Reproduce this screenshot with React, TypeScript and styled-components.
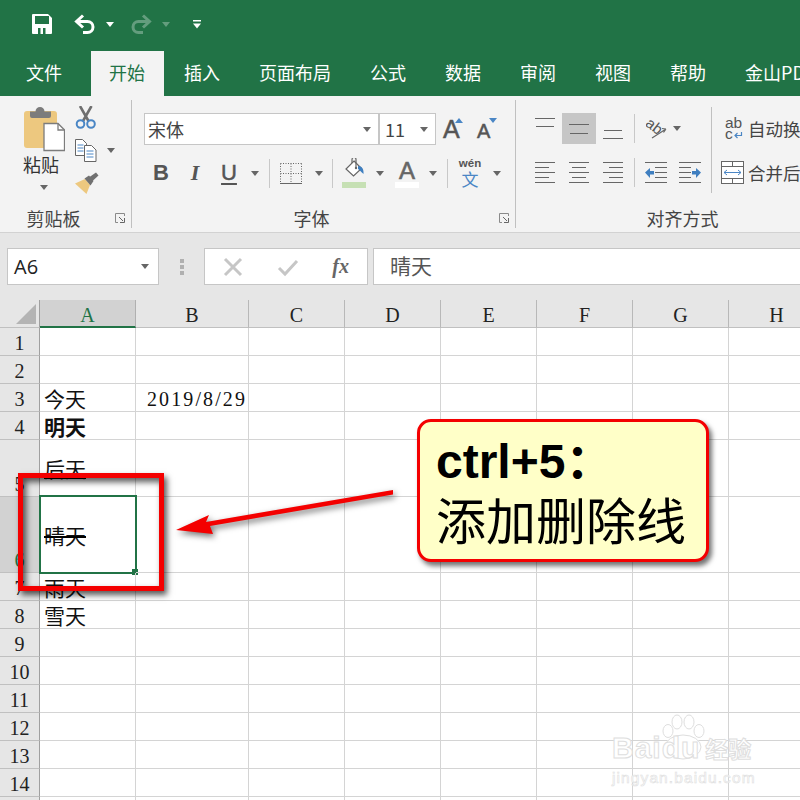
import styled, {createGlobalStyle} from 'styled-components'
import {FC, ReactNode} from 'react'

const GREEN = '#217346'
const CJK = '"Noto Sans CJK SC", "Liberation Sans", sans-serif'
const SHEET_FONT = '"Liberation Serif", "Noto Sans CJK SC", serif'

const Global = createGlobalStyle`
  html, body { margin: 0; padding: 0; background: #fff; }
  body { width: 800px; height: 800px; overflow: hidden; font-family: ${CJK}; }
`

const Page = styled.div`
  position: relative;
  width: 800px;
  height: 800px;
  overflow: hidden;
  display: flex;
  flex-direction: column;
`

/* title + tabs */
const QuickBar = styled.div`
  height: 48px;
  flex: none;
  background: ${GREEN};
  display: flex;
  align-items: center;
  padding-left: 32px;
  box-sizing: border-box;
`
const Quick = styled.div<{$ml?: number; $w?: number; $dim?: boolean}>`
  display: flex;
  align-items: center;
  justify-content: center;
  flex: none;
  margin-left: ${p => p.$ml ?? 0}px;
  width: ${p => (p.$w ? `${p.$w}px` : 'auto')};
  opacity: ${p => (p.$dim ? 0.3 : 1)};
`
const TabBar = styled.div`
  height: 48px;
  flex: none;
  background: ${GREEN};
  display: flex;
  align-items: flex-end;
  padding-left: 6px;
  white-space: nowrap;
`
const Tab = styled.div<{$active?: boolean; $mr?: number}>`
  height: 45px;
  line-height: 42px;
  padding: 0 19px 0 ${p => (p.$active ? 18 : 20)}px;
  margin-right: ${p => p.$mr ?? 0}px;
  font-size: 18px;
  color: ${p => (p.$active ? GREEN : '#fff')};
  background: ${p => (p.$active ? '#f3f3f3' : 'transparent')};
  flex: none;
`

/* ribbon */
const Ribbon = styled.div`
  height: 137px;
  flex: none;
  background: #f3f3f3;
  border-bottom: 1px solid #d2d2d2;
  box-sizing: border-box;
  display: flex;
  padding-top: 4px;
  color: #444;
`
const Group = styled.div<{$w: number}>`
  width: ${p => p.$w}px;
  height: 128px;
  flex: none;
  display: flex;
  flex-direction: column;
  box-sizing: border-box;
  border-right: 1px solid #c0c0c0;
`
const GroupBody = styled.div<{$pl: number; $pt: number}>`
  flex: 1;
  display: flex;
  padding: ${p => p.$pt}px 0 0 ${p => p.$pl}px;
  min-height: 0;
`
const GroupFoot = styled.div`
  height: 20px;
  flex: none;
  display: flex;
  align-items: center;
`
const GroupLabel = styled.div`
  flex: 1;
  text-align: center;
  font-size: 18px;
  line-height: 20px;
  color: #444;
`
const Launcher = styled.div`
  width: 24px;
  flex: none;
  display: flex;
  justify-content: flex-start;
  padding-left: 8px;
  box-sizing: border-box;
`
const Caret = styled.span<{$dark?: boolean}>`
  display: inline-block;
  width: 0;
  height: 0;
  border-left: 4.5px solid transparent;
  border-right: 4.5px solid transparent;
  border-top: 5px solid ${p => (p.$dark ? '#666' : '#fff')};
`
const PasteCol = styled.div`
  width: 42px;
  flex: none;
  display: flex;
  flex-direction: column;
  align-items: center;
`
const PasteLabel = styled.div`
  font-size: 18px;
  line-height: 24px;
  margin: 0 6px 0 0;
  white-space: nowrap;
  color: #333;
`
const PasteCaret = styled.div`
  margin-top: 2px;
  line-height: 0;
  padding-top: 5px;
`
const ClipCol = styled.div`
  margin-left: 10px;
  display: flex;
  flex-direction: column;
  gap: 11px;
`
const ClipRow = styled.div`
  display: flex;
  align-items: center;
  height: 22px;
`
const CaretSlot = styled.div<{$w?: number; $ml?: number}>`
  width: ${p => p.$w ?? 18}px;
  margin-left: ${p => p.$ml ?? 0}px;
  flex: none;
  display: flex;
  justify-content: center;
  align-items: center;
`
const FontCol = styled.div`
  display: flex;
  flex-direction: column;
  gap: 12px;
`
const FontRow = styled.div`
  height: 32px;
  display: flex;
  align-items: center;
`
const FontBox = styled.div<{$w: number; $pl: number}>`
  width: ${p => p.$w}px;
  height: 32px;
  flex: none;
  box-sizing: border-box;
  background: #fff;
  border: 1.5px solid #c6c6c6;
  display: flex;
  align-items: center;
  justify-content: space-between;
  padding: 0 7px 0 ${p => p.$pl}px;
  font-size: 18px;
  color: #444;
`
const GrowBtn = styled.div<{$ml: number; $small?: boolean}>`
  position: relative;
  margin-left: ${p => p.$ml}px;
  width: 20px;
  height: 32px;
  box-sizing: border-box;
  padding-top: ${p => (p.$small ? 2 : 0)}px;
  flex: none;
  font: 400 ${p => (p.$small ? 20 : 25)}px/32px "Liberation Sans", sans-serif;
  color: #555;
  -webkit-text-stroke: 0.5px #555;
`
const GrowMark = styled.span<{$down?: boolean}>`
  position: absolute;
  right: 0;
  top: 5px;
  width: 0;
  height: 0;
  border-left: 4px solid transparent;
  border-right: 4px solid transparent;
  ${p => (p.$down
    ? 'border-top: 5px solid #4a86c5;'
    : 'border-bottom: 5px solid #4a86c5;')}
`
const Glyph = styled.div<{$kind: 'b' | 'i' | 'u'}>`
  width: 34px;
  flex: none;
  text-align: center;
  color: #555;
  font-size: 22px;
  line-height: 30px;
  font-family: ${p => (p.$kind === 'i' ? '"Liberation Serif", serif' : '"Liberation Sans", sans-serif')};
  font-weight: ${p => (p.$kind === 'u' ? 400 : 700)};
  font-style: ${p => (p.$kind === 'i' ? 'italic' : 'normal')};
  text-decoration: ${p => (p.$kind === 'u' ? 'underline' : 'none')};
  text-underline-offset: 3px;
  text-decoration-thickness: 2px;
  -webkit-text-stroke: ${p => (p.$kind === 'u' ? '0.5px #555' : '0')};
`
const VSep = styled.div<{$ml?: number; $mr?: number}>`
  width: 1px;
  height: 29px;
  flex: none;
  margin-left: ${p => p.$ml ?? 0}px;
  margin-right: ${p => p.$mr ?? 0}px;
  background: #c8c8c8;
`
const ColorBtn = styled.div<{$ml: number}>`
  width: 24px;
  height: 30px;
  flex: none;
  margin-left: ${p => p.$ml}px;
  display: flex;
  flex-direction: column;
  align-items: center;
  justify-content: flex-end;
`
const ColorA = styled.div`
  font: 400 24px/22px "Liberation Sans", sans-serif;
  color: #666;
  -webkit-text-stroke: 0.6px #666;
`
const ColorBar = styled.div<{$c: string}>`
  width: 24px;
  height: 6px;
  flex: none;
  background: ${p => p.$c};
`
const PhoneticBtn = styled.div`
  margin-left: 11px;
  width: 22px;
  flex: none;
  display: flex;
  flex-direction: column;
  align-items: center;
  height: 32px;
`
const PhoneticTop = styled.div`
  font: 700 11.5px/12px "Liberation Sans", sans-serif;
  color: #555;
`
const PhoneticBottom = styled.div`
  font-size: 17px;
  line-height: 20px;
  color: #4a86c5;
`
const AlignRows = styled.div`
  width: 183px;
  flex: none;
  display: flex;
  flex-direction: column;
  gap: 13px;
`
const AlignRow = styled.div`
  height: 31px;
  display: flex;
  align-items: center;
`
const AlignCell = styled.div<{$on?: boolean}>`
  width: 34px;
  height: 31px;
  flex: none;
  display: flex;
  align-items: center;
  justify-content: center;
  background: ${p => (p.$on ? '#c6c6c6' : 'transparent')};
`
const InnerSep = styled.div`
  width: 1px;
  height: 86px;
  margin-top: -6px;
  flex: none;
  background: #c0c0c0;
`
const WrapCol = styled.div`
  margin-left: 9px;
  display: flex;
  flex-direction: column;
  gap: 13px;
`
const WrapRow = styled.div`
  height: 31px;
  display: flex;
  align-items: center;
  font-size: 17.5px;
  white-space: nowrap;
  color: #444;
`
const WrapIcon = styled.div`
  width: 27px;
  flex: none;
  display: flex;
  align-items: center;
`

/* formula bar */
const FormulaBar = styled.div`
  height: 67px;
  flex: none;
  background: #e6e6e6;
  box-sizing: border-box;
  padding: 15px 0 0 7px;
  display: flex;
  align-items: flex-start;
`
const NameBox = styled.div`
  width: 152px;
  height: 37px;
  box-sizing: border-box;
  flex: none;
  background: #fff;
  border: 1px solid #c6c6c6;
  display: flex;
  align-items: center;
  justify-content: space-between;
  padding: 0 9px 0 6px;
  font: 400 20px "Open Sans", "Liberation Sans", sans-serif;
  color: #222;
`
const Grip = styled.div`
  width: 45px;
  height: 37px;
  flex: none;
  display: flex;
  align-items: center;
  justify-content: center;
`
const FxBox = styled.div`
  width: 164px;
  height: 37px;
  flex: none;
  box-sizing: border-box;
  background: #fff;
  border: 1px solid #c6c6c6;
  display: flex;
  align-items: center;
  justify-content: space-between;
  padding: 0 18px 0 18px;
`
const FxLabel = styled.span`
  font: italic 700 20px "Liberation Serif", serif;
  color: #666;
`
const FormulaInput = styled.div`
  flex: 1;
  height: 37px;
  margin-left: 5px;
  box-sizing: border-box;
  background: #fff;
  border: 1px solid #c6c6c6;
  border-right: 0;
  padding-left: 16px;
  font-size: 21px;
  line-height: 33px;
  color: #555;
`

/* sheet */
const Sheet = styled.div`
  flex: 1;
  display: grid;
  grid-template-columns: 40px 96px 113px repeat(6, 96px);
  grid-auto-rows: auto;
  align-content: start;
  background: #fff;
  overflow: hidden;
`
const Corner = styled.div`
  height: 28px;
  background: #e6e6e6;
  border-right: 1px solid #a0a0a0;
  border-bottom: 1px solid #c0c0c0;
  box-sizing: border-box;
  display: flex;
  align-items: flex-end;
  justify-content: flex-end;
  padding: 0 3px 3px 0;
`
const ColHead = styled.div<{$on?: boolean}>`
  height: 28px;
  background: ${p => (p.$on ? '#d2d2d2' : '#e6e6e6')};
  color: ${p => (p.$on ? GREEN : '#222')};
  border-right: 1px solid ${p => (p.$on ? '#b0b0b0' : '#b8b8b8')};
  border-bottom: ${p => (p.$on ? `2px solid ${GREEN}` : '1px solid #c0c0c0')};
  box-sizing: border-box;
  text-align: center;
  font: 400 20px/30px ${SHEET_FONT};
`
const RowHead = styled.div<{$on?: boolean; $h: number}>`
  height: ${p => p.$h}px;
  background: ${p => (p.$on ? '#d2d2d2' : '#e6e6e6')};
  color: ${p => (p.$on ? GREEN : '#222')};
  border-right: 1px solid #a0a0a0;
  border-bottom: 1px solid #c0c0c0;
  box-sizing: border-box;
  display: flex;
  align-items: flex-end;
  justify-content: center;
  font: 400 20px/24px ${SHEET_FONT};
`
const Cell = styled.div<{$h: number; $right?: boolean}>`
  position: relative;
  height: ${p => p.$h}px;
  box-sizing: border-box;
  border-right: 1px solid #d4d4d4;
  border-bottom: 1px solid #d4d4d4;
  display: flex;
  align-items: center;
  justify-content: ${p => (p.$right ? 'flex-end' : 'flex-start')};
  padding: 0 ${p => (p.$right ? 1 : 0)}px 0 4px;
  white-space: nowrap;
  color: #111;
`
const CellText = styled.span<{$bold?: boolean; $line?: 'under' | 'strike'}>`
  position: relative;
  font: ${p => (p.$bold ? 700 : 400)} 21px/24px ${CJK};
  &::after {
    content: '';
    display: ${p => (p.$line ? 'block' : 'none')};
    position: absolute;
    left: 0;
    right: 0;
    top: ${p => (p.$line === 'under' ? 21 : 13)}px;
    height: 2px;
    background: #000;
  }
`
const DateText = styled.span`
  font: 400 20px/24px ${SHEET_FONT};
  letter-spacing: 2.1px;
  margin-top: 2px;
`
const Selection = styled.div`
  position: absolute;
  left: -1px;
  top: -2px;
  right: -2px;
  bottom: -2px;
  border: 2px solid ${GREEN};
  &::after {
    content: '';
    position: absolute;
    right: -3px;
    bottom: -3px;
    width: 6px;
    height: 6px;
    background: ${GREEN};
  }
`

/* annotations lying over the sheet */
const RedFrame = styled.div`
  position: absolute;
  left: 18px;
  top: 473px;
  width: 146px;
  height: 118px;
  box-sizing: border-box;
  border: 5px solid #f40000;
  box-shadow: 3px 4px 6px rgba(0, 0, 0, 0.65), inset 3px 4px 6px rgba(0, 0, 0, 0.65);
`
const Arrow = styled.svg`
  position: absolute;
  left: 170px;
  top: 480px;
  filter: drop-shadow(2px 3px 3px rgba(0, 0, 0, 0.55));
`
const Callout = styled.div`
  position: absolute;
  left: 417px;
  top: 419px;
  width: 292px;
  height: 143px;
  box-sizing: border-box;
  border: 3px solid #f40000;
  border-radius: 14px;
  background: #ffffc8;
  box-shadow: 3px 4px 5px rgba(0, 0, 0, 0.55);
  padding: 9px 0 0 16px;
  color: #000;
`
const CalloutKey = styled.div`
  font: 700 48px/62px "Liberation Sans", "Noto Sans CJK SC", sans-serif;
  white-space: nowrap;
`
const CalloutText = styled.div`
  font: 400 50px/60px ${CJK};
  white-space: nowrap;
  margin-top: -5px;
`
const Watermark = styled.div`
  position: absolute;
  left: 612px;
  top: 714px;
  width: 150px;
  color: #fff;
  -webkit-text-stroke: 1px #dedede;
`
const WmTop = styled.div`
  position: relative;
  z-index: 1;
  display: flex;
  align-items: baseline;
  font: 700 30px/36px "Liberation Sans", sans-serif;
  letter-spacing: 1px;
  margin-top: 16px;
`
const WmCn = styled.span`
  margin-left: 5px;
  font: 700 23px/30px ${CJK};
  letter-spacing: 0;
`
const WmUrl = styled.div`
  font: 400 15.5px/18px "Liberation Sans", sans-serif;
  letter-spacing: 1.1px;
  margin-top: 3px;
  -webkit-text-stroke: 0.6px #dedede;
`
const WmPaw = styled.svg`
  position: absolute;
  left: 49px;
  top: 0;
`

/* icons */
const SaveIcon = () => (
    <svg width="20" height="20" viewBox="0 0 20 20">
        <path d="M1 0h15l4 4v15a1 1 0 0 1-1 1H1a1 1 0 0 1-1-1V1a1 1 0 0 1 1-1z" fill="#fff"/>
        <rect x="3" y="2" width="14" height="8" fill={GREEN}/>
        <rect x="6" y="14" width="2.5" height="6" fill={GREEN}/>
        <rect x="11" y="14" width="2.5" height="6" fill={GREEN}/>
    </svg>
)
const UndoIcon: FC<{flip?: boolean}> = ({flip}) => (
    <svg width="22" height="20" viewBox="0 0 22 20" style={flip ? {transform: 'scaleX(-1)'} : undefined}>
        <path d="M9 1.5 2.5 7.5 9 13.5M3 7.5h10.5a5 5 0 0 1 0 11H9" fill="none" stroke="#fff" strokeWidth="3"/>
    </svg>
)
const CustomizeIcon = () => (
    <svg width="10" height="9" viewBox="0 0 10 9">
        <rect x="1" width="8" height="1.5" fill="#fff"/>
        <path d="M1 3.5h8L5 8.5z" fill="#fff"/>
    </svg>
)
const PasteIcon = () => (
    <svg width="42" height="46" viewBox="0 0 42 46" style={{flex: 'none'}}>
        <rect x="1" y="5" width="33" height="37" rx="3" fill="#edc87f"/>
        <path d="M7 5.500h5.500a4 4 0 0 1 9 0H28v4.500a2 2 0 0 1-2 2H9a2 2 0 0 1-2-2z" fill="#7c7c7c"/>
        <path d="M21 17.500h14l6.500 6.500v20.500H21z" fill="#fff" stroke="#7c7c7c" strokeWidth="1.300"/>
        <path d="M35 17.500v6.500h6.500" fill="none" stroke="#7c7c7c" strokeWidth="1.300"/>
    </svg>
)
const ScissorsIcon = () => (
    <svg width="22" height="23" viewBox="0 0 22 23">
        <path d="M5 0 13.500 15M16.500 0 8 15" stroke="#6f6f6f" strokeWidth="2.600" fill="none"/>
        <circle cx="5.500" cy="18" r="3.800" fill="none" stroke="#4a86c5" strokeWidth="2"/>
        <circle cx="16" cy="18" r="3.800" fill="none" stroke="#4a86c5" strokeWidth="2"/>
    </svg>
)
const CopyIcon = () => (
    <svg width="22" height="23" viewBox="0 0 22 23">
        <path d="M.5.5h7l4 4v12H.5z" fill="#fff" stroke="#666"/>
        <path d="M2.500 6h6M2.500 9h6M2.500 12h6" stroke="#4a86c5"/>
        <path d="M9.500 6.500h7l4.500 4.500v11.500H9.500z" fill="#fff" stroke="#666"/>
        <path d="M11.500 12h7M11.500 15h7M11.500 18h7" stroke="#4a86c5"/>
    </svg>
)
const BrushIcon = () => (
    <svg width="24" height="22" viewBox="0 0 24 22">
        <path d="M0 11.500 10 7l5 6-3.500 9z" fill="#edc87f"/>
        <path d="M9.500 6.500 14 3.500l4.500 5.500-3 4.500z" fill="#707070"/>
        <path d="M14.500 5 21 .5l2.500 3L17.500 9z" fill="#707070"/>
    </svg>
)
const LauncherIcon = () => (
    <svg width="10" height="10" viewBox="0 0 10 10">
        <path d="M9.500 3V.5H.5v9H3" fill="none" stroke="#8a8a8a"/>
        <path d="M4 4 8 8M9.500 5v4.500H5" fill="none" stroke="#666"/>
    </svg>
)
const BorderIcon = () => (
    <svg width="22" height="21" viewBox="0 0 22 21">
        <path d="M.5.5h21M.5 .5v20M21.500.5v20M11 .5v20M.5 10.500h21" stroke="#666" strokeDasharray="1 1.500" fill="none"/>
        <path d="M0 20.500h22" stroke="#666"/>
    </svg>
)
const FillIcon = () => (
    <svg width="24" height="23" viewBox="0 0 24 23" style={{flex: 'none', marginBottom: 1}}>
        <path d="M12 3 19.500 10.500 11.500 18 4 11z" fill="#fff" stroke="#666" strokeWidth="1.200"/>
        <path d="M10 5V1.500a2 2 0 0 1 4 0V9" fill="none" stroke="#666" strokeWidth="1.200"/>
        <path d="M16 8c4 0 6 3 5.500 8-1.500-1-2.500-3-5.500-5z" fill="#3f7fc0"/>
        <circle cx="14" cy="10" r="1.200" fill="#666"/>
    </svg>
)
const AlignIcon: FC<{lines: [number, number, number][]; h?: number}> = ({lines, h = 22}) => (
    <svg width="20" height={h} viewBox={`0 0 20 ${h}`}>
        {lines.map(([a, b, y], i) => <path key={i} d={`M${a} ${y + 0.5}H${b}`} stroke="#666"/>)}
    </svg>
)
const OrientIcon = () => (
    <svg width="22" height="21" viewBox="0 0 22 21">
        <g transform="rotate(38 8 8)">
            <text x="0" y="13" fontFamily="Liberation Sans" fontSize="15" fill="#555">ab</text>
        </g>
        <path d="M6 20 20 11M20 11l-4-.500M20 11l-2.500 3.500" fill="none" stroke="#666" strokeWidth="1.200"/>
    </svg>
)
const IndentIcon: FC<{flip?: boolean}> = ({flip}) => (
    <svg width="22" height="22" viewBox="0 0 22 22" style={flip ? {transform: 'scaleX(-1)'} : undefined}>
        <path d="M0 .5h22M10 5.500h12M10 10.500h12M10 15.500h12M0 20.500h22" stroke="#666"/>
        <path d="M0 10.500 5 6v3h4v3.500H5V16z" fill="#3f7fc0"/>
    </svg>
)
const WrapGlyph = () => (
    <svg width="20" height="23" viewBox="0 0 20 23" style={{marginLeft: 4}}>
        <text x="0" y="11" fontFamily="Liberation Sans" fontSize="15.500" fill="#555">ab</text>
        <text x="0" y="22" fontFamily="Liberation Sans" fontSize="15.500" fill="#555">c</text>
        <path d="M16.500 15v3.500h-6M12.500 16 10 18.500l2.500 2.500" fill="none" stroke="#4a86c5" strokeWidth="1.200"/>
    </svg>
)
const MergeIcon = () => (
    <svg width="23" height="23" viewBox="0 0 23 23">
        <rect x=".5" y=".5" width="22" height="22" fill="#fff" stroke="#666"/>
        <path d="M0 5.500h23M0 17.500h23M11.500 0v5.500M11.500 17.500V23" stroke="#666"/>
        <path d="M3 11.500h17M6 9 3 11.500 6 14M17 9l3 2.500L17 14" fill="none" stroke="#4a86c5"/>
    </svg>
)
const CrossIcon = () => (
    <svg width="20" height="20" viewBox="0 0 20 20">
        <path d="M2 2 18 18M18 2 2 18" stroke="#c6c6c6" strokeWidth="3"/>
    </svg>
)
const CheckIcon = () => (
    <svg width="22" height="20" viewBox="0 0 22 20">
        <path d="M2 11 8 17 20 4" stroke="#c6c6c6" strokeWidth="3" fill="none"/>
    </svg>
)
const GripIcon = () => (
    <svg width="4" height="16" viewBox="0 0 4 16">
        <path d="M0 0h4v4H0zM0 6h4v4H0zM0 12h4v4H0z" fill="#b0b0b0"/>
    </svg>
)
const CornerIcon = () => (
    <svg width="20" height="20" viewBox="0 0 20 20">
        <path d="M20 0v20H0z" fill="#b4b4b4"/>
    </svg>
)

const top: [number, number, number][] = [[0, 20, 0], [1, 19, 8]]
const middle: [number, number, number][] = [[0, 20, 6], [1, 19, 15]]
const bottom: [number, number, number][] = [[1, 19, 12], [0, 20, 20]]
const five = (s: [number, number]): [number, number, number][] => [
    [0, 20, 0], [s[0], s[1], 5], [0, 20, 10], [s[0], s[1], 15], [0, 20, 20],
]

const columns = ['A', 'B', 'C', 'D', 'E', 'F', 'G', 'H']
const rowHeights = [28, 28, 28, 28, 57, 76, 28, 28, 28, 28, 28, 28, 28, 28, 28]

const contents: Record<number, ReactNode> = {
    3: <CellText>今天</CellText>,
    4: <CellText $bold>明天</CellText>,
    5: <CellText $line="under">后天</CellText>,
    6: <CellText $line="strike">晴天</CellText>,
    7: <CellText>雨天</CellText>,
    8: <CellText>雪天</CellText>,
}

const App = () => (
    <Page>
        <Global/>
        <QuickBar>
            <SaveIcon/>
            <Quick $ml={22}><UndoIcon/></Quick>
            <Quick $ml={9} $w={10}><Caret/></Quick>
            <Quick $ml={15} $dim><UndoIcon flip/></Quick>
            <Quick $ml={9} $w={10} $dim><Caret/></Quick>
            <Quick $ml={21}><CustomizeIcon/></Quick>
        </QuickBar>
        <TabBar>
            <Tab $mr={10}>文件</Tab>
            <Tab $active>开始</Tab>
            <Tab>插入</Tab>
            <Tab>页面布局</Tab>
            <Tab>公式</Tab>
            <Tab>数据</Tab>
            <Tab>审阅</Tab>
            <Tab>视图</Tab>
            <Tab>帮助</Tab>
            <Tab>金山PDF</Tab>
        </TabBar>
        <Ribbon>
            <Group $w={132}>
                <GroupBody $pl={23} $pt={6}>
                    <PasteCol>
                        <PasteIcon/>
                        <PasteLabel>粘贴</PasteLabel>
                        <PasteCaret><Caret $dark/></PasteCaret>
                    </PasteCol>
                    <ClipCol>
                        <ClipRow><ScissorsIcon/></ClipRow>
                        <ClipRow><CopyIcon/><CaretSlot $ml={5}><Caret $dark/></CaretSlot></ClipRow>
                        <ClipRow><BrushIcon/></ClipRow>
                    </ClipCol>
                </GroupBody>
                <GroupFoot>
                    <GroupLabel>剪贴板</GroupLabel>
                    <Launcher><LauncherIcon/></Launcher>
                </GroupFoot>
            </Group>
            <Group $w={384}>
                <GroupBody $pl={12} $pt={13}>
                    <FontCol>
                        <FontRow>
                            <FontBox $w={235} $pl={3}>宋体<Caret $dark/></FontBox>
                            <FontBox $w={57} $pl={5}>11<Caret $dark/></FontBox>
                            <GrowBtn $ml={7}>A<GrowMark/></GrowBtn>
                            <GrowBtn $ml={14} $small>A<GrowMark $down/></GrowBtn>
                        </FontRow>
                        <FontRow>
                            <Glyph $kind="b">B</Glyph>
                            <Glyph $kind="i">I</Glyph>
                            <Glyph $kind="u">U</Glyph>
                            <CaretSlot><Caret $dark/></CaretSlot>
                            <VSep $ml={5} $mr={10}/>
                            <BorderIcon/>
                            <CaretSlot $ml={8}><Caret $dark/></CaretSlot>
                            <VSep $ml={4}/>
                            <ColorBtn $ml={9}><FillIcon/><ColorBar $c="#c6e0b4"/></ColorBtn>
                            <CaretSlot $ml={5}><Caret $dark/></CaretSlot>
                            <ColorBtn $ml={6}><ColorA>A</ColorA><ColorBar $c="#fff"/></ColorBtn>
                            <CaretSlot $ml={5}><Caret $dark/></CaretSlot>
                            <VSep $ml={5}/>
                            <PhoneticBtn>
                                <PhoneticTop>wén</PhoneticTop>
                                <PhoneticBottom>文</PhoneticBottom>
                            </PhoneticBtn>
                            <CaretSlot $ml={7}><Caret $dark/></CaretSlot>
                        </FontRow>
                    </FontCol>
                </GroupBody>
                <GroupFoot>
                    <GroupLabel>字体</GroupLabel>
                    <Launcher><LauncherIcon/></Launcher>
                </GroupFoot>
            </Group>
            <Group $w={358}>
                <GroupBody $pl={12} $pt={13}>
                    <AlignRows>
                        <AlignRow>
                            <AlignCell><AlignIcon lines={top}/></AlignCell>
                            <AlignCell $on><AlignIcon lines={middle}/></AlignCell>
                            <AlignCell><AlignIcon lines={bottom}/></AlignCell>
                            <VSep $ml={4} $mr={11}/>
                            <OrientIcon/>
                            <CaretSlot><Caret $dark/></CaretSlot>
                        </AlignRow>
                        <AlignRow>
                            <AlignCell><AlignIcon lines={five([0, 14])}/></AlignCell>
                            <AlignCell><AlignIcon lines={five([3, 17])}/></AlignCell>
                            <AlignCell><AlignIcon lines={five([6, 20])}/></AlignCell>
                            <VSep $ml={4} $mr={10}/>
                            <IndentIcon/>
                            <CaretSlot $w={12}/>
                            <IndentIcon flip/>
                        </AlignRow>
                    </AlignRows>
                    <InnerSep/>
                    <WrapCol>
                        <WrapRow><WrapIcon><WrapGlyph/></WrapIcon>自动换</WrapRow>
                        <WrapRow><WrapIcon><MergeIcon/></WrapIcon>合并后</WrapRow>
                    </WrapCol>
                </GroupBody>
                <GroupFoot>
                    <GroupLabel>对齐方式</GroupLabel>
                    <Launcher><LauncherIcon/></Launcher>
                </GroupFoot>
            </Group>
        </Ribbon>
        <FormulaBar>
            <NameBox>A6<Caret $dark/></NameBox>
            <Grip><GripIcon/></Grip>
            <FxBox><CrossIcon/><CheckIcon/><FxLabel>fx</FxLabel></FxBox>
            <FormulaInput>晴天</FormulaInput>
        </FormulaBar>
        <Sheet>
            <Corner><CornerIcon/></Corner>
            {columns.map(c => <ColHead key={c} $on={c === 'A'}>{c}</ColHead>)}
            {rowHeights.map((h, i) => {
                const n = i + 1
                return [
                    <RowHead key={`h${n}`} $h={h} $on={n === 6}>{n}</RowHead>,
                    ...columns.map(c => (
                        <Cell key={c + n} $h={h} $right={c === 'B' && n === 3}>
                            {c === 'A' && contents[n]}
                            {c === 'B' && n === 3 && <DateText>2019/8/29</DateText>}
                            {c === 'A' && n === 6 && <Selection/>}
                        </Cell>
                    )),
                ]
            })}
        </Sheet>
        <RedFrame/>
        <Arrow width="226" height="62" viewBox="0 0 226 62">
            <path d="M6 50 39 35 36 42 223 10 223 14.500 40 46 43 54z" fill="#f40000"/>
        </Arrow>
        <Callout>
            <CalloutKey>ctrl+5：</CalloutKey>
            <CalloutText>添加删除线</CalloutText>
        </Callout>
        <Watermark>
            <WmPaw width="46" height="46" viewBox="0 0 46 46">
                <g fill="#fff" stroke="#dedede">
                    <ellipse cx="7" cy="17" rx="5" ry="6.500"/>
                    <ellipse cx="16" cy="8" rx="5" ry="7"/>
                    <ellipse cx="28" cy="8" rx="5" ry="7"/>
                    <ellipse cx="38" cy="17" rx="5" ry="6.500"/>
                    <ellipse cx="22" cy="33" rx="18" ry="12"/>
                </g>
            </WmPaw>
            <WmTop>Baidu<WmCn>经验</WmCn></WmTop>
            <WmUrl>jingyan.baidu.com</WmUrl>
        </Watermark>
    </Page>
)

export default App
